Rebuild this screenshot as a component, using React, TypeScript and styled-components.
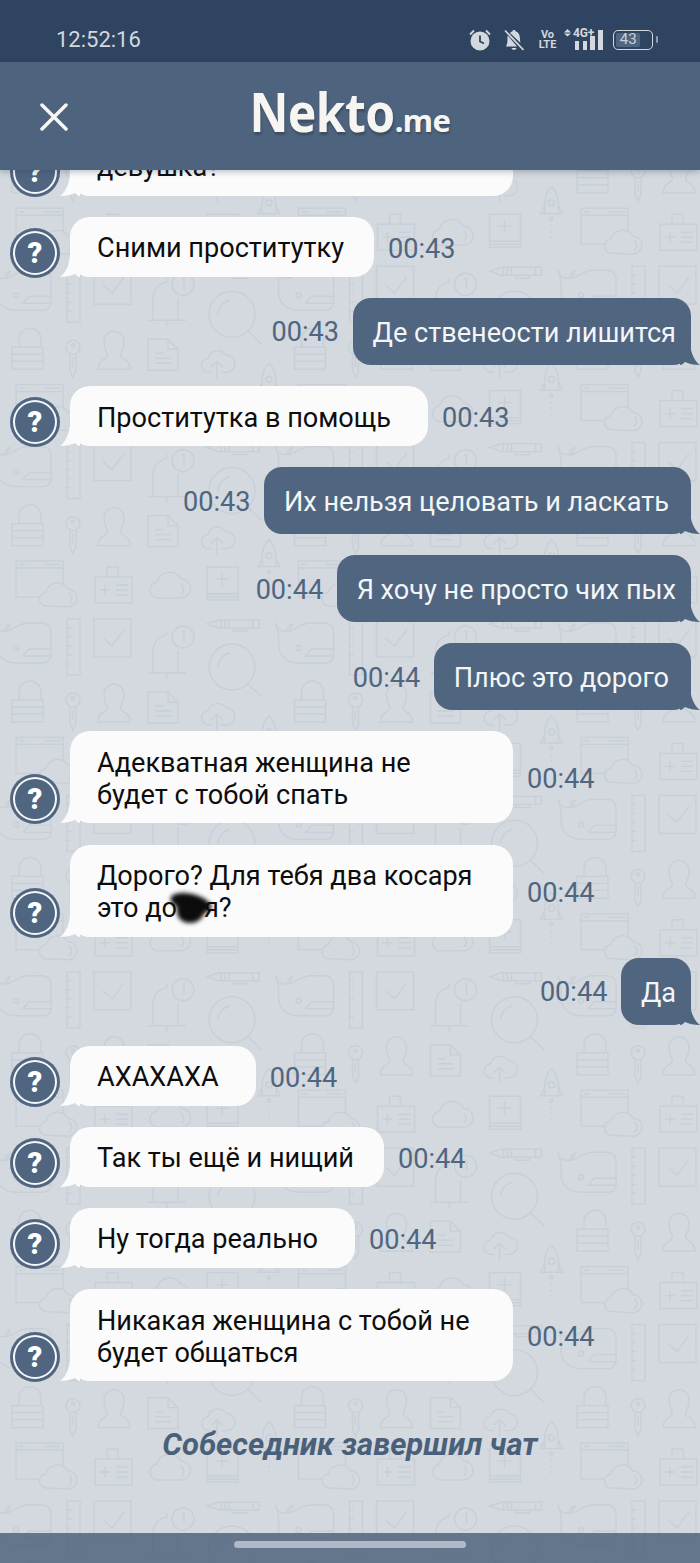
import React from "react";
import styled, { createGlobalStyle } from "styled-components";

const Global = createGlobalStyle`
  html, body { margin: 0; padding: 0; background: #d3d9de; }
  #root { width: 700px; height: 1563px; }
`;

const Page = styled.div`
  position: relative;
  width: 700px;
  height: 1563px;
  display: flex;
  flex-direction: column;
  overflow: hidden;
  background: #d3d9de;
  font-family: Roboto, "Noto Sans", sans-serif;
`;

const Wallpaper = styled.svg`
  position: absolute;
  inset: 0;
  width: 700px;
  height: 1563px;
  fill: none;
  stroke: #c8cfd7;
  stroke-width: 1.4;
`;

const StatusBar = styled.div`
  position: relative;
  z-index: 3;
  flex: none;
  height: 62px;
  background: #2f4460;
  display: flex;
  align-items: center;
  justify-content: space-between;
  padding: 18px 47px 0 56px;
  box-sizing: border-box;
  color: #d3d8de;
`;

const Clock = styled.span`
  font-size: 22px;
  line-height: 26px;
`;

const StatusIcons = styled.div`
  display: flex;
  align-items: center;
`;

const Glyph = styled.svg<{ $gap: number }>`
  display: block;
  flex: none;
  margin-right: ${(p) => p.$gap}px;
`;

const VoLte = styled.span`
  display: flex;
  flex-direction: column;
  align-items: center;
  width: 15px;
  margin-right: 9px;
  font-size: 11px;
  font-weight: 700;
  line-height: 10px;
`;

const Signal = styled.div`
  position: relative;
  width: 40px;
  height: 24px;
  margin-right: 9px;
`;

const NetLabel = styled.span`
  position: absolute;
  left: 9px;
  top: 0;
  font-size: 12px;
  font-weight: 700;
  line-height: 11px;
  letter-spacing: -0.2px;
`;

const Battery = styled.div`
  position: relative;
  width: 40px;
  height: 20px;
  box-sizing: border-box;
  border: 1.5px solid #d3d8de;
  border-radius: 5px;
  display: flex;
  align-items: stretch;
  padding: 2px;
  &::after {
    content: "";
    position: absolute;
    right: -6px;
    top: 5px;
    width: 2px;
    height: 7px;
    border-radius: 1px;
    background: #8e9aa9;
  }
`;

const BatteryFill = styled.span`
  width: 72%;
  border-radius: 2px;
  background: #4f6580;
  font-size: 15px;
  line-height: 13px;
  text-align: center;
  color: #c9d0d8;
`;

const Header = styled.header`
  position: relative;
  z-index: 3;
  flex: none;
  height: 108px;
  background: #4e647e;
  box-shadow: 0 2px 6px rgba(40, 55, 75, 0.3);
  display: flex;
  align-items: center;
  justify-content: center;
`;

const CloseButton = styled.svg`
  position: absolute;
  left: 40px;
  top: 41px;
`;

const Logo = styled.div`
  display: flex;
  align-items: baseline;
  margin: 2px 0 0 0;
  color: #f6f5f2;
  font-family: "Noto Sans", sans-serif;
  font-weight: 700;
  text-shadow: 1px 2px 2px rgba(40, 50, 65, 0.45);
`;

const LogoName = styled.span`
  display: inline-block;
  font-size: 48px;
  line-height: 60px;
  letter-spacing: -0.6px;
  transform: scaleY(1.12);
  transform-origin: 50% 76%;
`;

const LogoTld = styled.span`
  font-size: 31px;
  line-height: 60px;
  letter-spacing: -0.5px;
`;

const Stage = styled.main`
  position: relative;
  z-index: 1;
  flex: 1;
  min-height: 0;
  display: flex;
  flex-direction: column;
  justify-content: flex-end;
  overflow: hidden;
`;

const Feed = styled.div`
  display: flex;
  flex-direction: column;
  gap: 21.1px;
`;

const Row = styled.div<{ $out?: boolean }>`
  display: flex;
  align-items: flex-end;
  justify-content: ${(p) => (p.$out ? "flex-end" : "flex-start")};
  padding: ${(p) => (p.$out ? "0 9px 0 0" : "0 0 0 10px")};
`;

const Avatar = styled.div`
  flex: none;
  width: 50px;
  height: 50px;
  margin: 0 10px 0 0;
  transform: translateY(1px);
  box-sizing: border-box;
  border-radius: 50%;
  background: #4f6580;
  display: flex;
  align-items: center;
  justify-content: center;
  color: #fff;
  font-size: 29px;
  font-weight: 900;
  box-shadow: inset 0 0 0 3px #4f6580, inset 0 0 0 5px #f4f6f8;
`;

const Bubble = styled.div<{ $wide?: boolean; $trail?: boolean }>`
  position: relative;
  box-sizing: border-box;
  width: ${(p) => (p.$wide ? "443px" : "auto")};
  padding: 15.5px ${(p) => (p.$trail ? 37 : 30)}px 12.5px 27px;
  border-radius: 20px;
  background: #fbfbfb;
  color: #0d0d0d;
  font-size: 27.1px;
  line-height: 32px;
`;

const OutBubble = styled.div<{ $trail?: boolean }>`
  position: relative;
  padding: 19px ${(p) => (p.$trail ? 22 : 15)}px 16px 19.5px;
  border-radius: 18px;
  background: #4f6580;
  color: #f3f5f7;
  font-size: 27.1px;
  line-height: 32px;
`;

const Tail = styled.svg<{ $out?: boolean }>`
  position: absolute;
  bottom: 0;
  ${(p) => (p.$out ? "right: -9px;" : "left: -10px;")}
  ${(p) => (p.$out ? "transform: scaleX(-1);" : "")}
`;

const Time = styled.time<{ $out?: boolean }>`
  align-self: center;
  flex: none;
  margin: ${(p) => (p.$out ? "2px 14px 0 0" : "4px 0 0 14px")};
  color: #4f6580;
  font-size: 27.1px;
  line-height: 32px;
`;

const Blot = styled.span`
  display: inline-block;
  position: relative;
  width: 27px;
  height: 24px;
  vertical-align: -2px;
  &::before {
    content: "";
    position: absolute;
    left: -7px;
    top: -1px;
    width: 42px;
    height: 18px;
    border-radius: 50%;
    background: #0c0c0c;
    filter: blur(2px);
    transform: rotate(14deg);
  }
  &::after {
    content: "";
    position: absolute;
    left: 0;
    top: 5px;
    width: 27px;
    height: 23px;
    border-radius: 45% 50% 55% 50%;
    background: #0c0c0c;
    filter: blur(2px);
  }
`;

const Ended = styled.div`
  margin: 47px 0 71px;
  text-align: center;
  color: #4a607a;
  font-size: 31px;
  line-height: 34px;
  font-weight: 700;
  font-style: italic;
`;

const NavBar = styled.div`
  position: relative;
  z-index: 2;
  flex: none;
  height: 30px;
  background: rgba(72, 92, 118, 0.8);
  display: flex;
  align-items: center;
  justify-content: center;
`;

const NavHandle = styled.span`
  width: 232px;
  height: 7px;
  margin-top: -7px;
  border-radius: 4px;
  background: #b0b9c5;
`;

const TileArt = () => (
  <g id="tile">
    {/* browser + cloud */}
    <rect x="16" y="561" width="47" height="36" />
    <path d="M16 568h47M19 564.500h6M44 564.500h16" />
    <path d="M47 606a7 7 0 0 1-1-14 12 12 0 0 1 22-3 9 9 0 0 1 0 18z" fill="#d3d9de" />
    <path d="M69 593a6 6 0 0 1 0 10" />
    {/* badge */}
    <rect x="95" y="577" width="37" height="26" />
    <path d="M107 577v-10h11v10M100 590h10M105 585v10M116 585h12M116 590h12M116 595h12" />
    {/* cloud */}
    <path d="M159 598a8 8 0 0 1-2-16 13 13 0 0 1 24-3 9 9 0 0 1 0 19z" />
    <path d="M181 584a6 6 0 0 1 0 10" />
    {/* book */}
    <path d="M207 567h31v33h-31zM207 594h31M207 597h31" />
    <path d="M222 572v14M215 579h14" />
    {/* pen */}
    <path d="M207 624l12-4h40v8h-40zM221 620v8M225 620v8M229 620v8M233 628v3h14v-3M253 620v8" />
    {/* whale */}
    <path d="M-7 624c2 6 5 7 9 7 2 0 3 1 3-1s2-6 5-6c-1 3-2 5-4 7 6 0 12-8 22-8h14c5 0 9 3 9 8v24c0 4-3 8-7 8H16c-12 0-20-8-20-18 0-6 2-9-3-22z" />
    <circle cx="16" cy="648" r="2.500" />
    <path d="M23 656l6-7h23M23 656h29" />
    {/* ruler */}
    <rect x="67" y="619" width="13" height="56" />
    <path d="M67 628h4M67 637h4M67 646h4M67 655h4M67 664h4" />
    {/* check */}
    <rect x="94" y="619" width="37" height="38" />
    <path d="M103 638l9 8 12-16" />
    {/* bell */}
    <path d="M153 673v-22c0-9 6-15 14-16M178 651v22M148 673h38M167 673v6M167 635v-4" />
    <circle cx="183" cy="637" r="11" fill="#d3d9de" />
    <path d="M182 632l2-1v11" />
    {/* magnifier */}
    <circle cx="232" cy="667" r="23" />
    <path d="M248 684l14 13M218 667a15 15 0 0 1 12-14" />
    {/* lock */}
    <path d="M19 700v-8a11 11 0 0 1 22 0v8M12 700h31v22H12zM12 707h31M12 714h31" />
    {/* key */}
    <circle cx="73" cy="700" r="7" />
    <circle cx="73" cy="698" r="1.500" />
    <path d="M70 707v17l3 6 3-6v-17M73 710v10" />
    {/* user */}
    <path d="M107 706c-3-5-3-9-3-12 0-6 5-10 10-10s10 4 10 10c0 3 0 7-3 12-1 3 0 4 3 6 4 2 6 5 6 10H98c0-5 2-8 6-10 3-2 4-3 3-6z" />
    {/* doc */}
    <path d="M148 692h20l10 10v21h-30zM168 692v10h10M155 706h8M155 711h16M155 716h16" />
    {/* cloud up */}
    <path d="M209 725a7 7 0 0 1-1-14 10 10 0 0 1 18-3 8 8 0 0 1 1 17h-6M211 725h-2" />
    <path d="M217 731v-17M211 720l6-6 6 6" />
    {/* rocket */}
    <path d="M269 716c5 4 7 11 7 20v7h-14v-7c0-9 2-16 7-20zM262 735l-4 8h4M276 735l4 8h-4" />
    <circle cx="269" cy="732" r="3" />
    <circle cx="269" cy="748" r="1.500" />
    <path d="M269 754v18" strokeDasharray="2 4" />
  </g>
);

const Wall = () => {
  const uses: React.ReactElement[] = [];
  for (let r = -3; r <= 6; r++) {
    for (let c = 0; c <= 3; c++) {
      if (r === 0 && c === 0) continue;
      uses.push(<use key={`${r}-${c}`} href="#tile" x={c * 282.5} y={r * 176.4} />);
    }
  }
  return (
    <Wallpaper viewBox="0 0 700 1563" aria-hidden="true">
      <TileArt />
      {uses}
    </Wallpaper>
  );
};

const InTail = ({ out }: { out?: boolean }) => (
  <Tail $out={out} width="20" height="24" viewBox="0 0 20 24" aria-hidden="true">
    <path
      d="M10 0C10 10 6 20 0 24C6 24 11 23 15 21C17 23 18 24 20 24V0Z"
      fill={out ? "#4f6580" : "#fbfbfb"}
    />
  </Tail>
);

type MsgProps = { time?: string; wide?: boolean; trail?: boolean; children: React.ReactNode };

const Incoming = ({ time, wide, trail, children }: MsgProps) => (
  <Row>
    <Avatar>?</Avatar>
    <Bubble $wide={wide} $trail={trail}>
      <InTail />
      {children}
    </Bubble>
    {time && <Time>{time}</Time>}
  </Row>
);

const Outgoing = ({ time, trail, children }: MsgProps) => (
  <Row $out>
    <Time $out>{time}</Time>
    <OutBubble $trail={trail}>
      <InTail out />
      {children}
    </OutBubble>
  </Row>
);

const StatusGlyphs = () => (
  <StatusIcons>
    <Glyph $gap={12} width="22" height="22" viewBox="0 0 22 22" aria-hidden="true">
      <circle cx="11" cy="12" r="9.500" fill="#d3d8de" />
      <path d="M11 6.500V12.500L15 14.500" fill="none" stroke="#2f4460" strokeWidth="1.800" />
      <path d="M1 5.500L5 1.500M21 5.500L17 1.500" fill="none" stroke="#d3d8de" strokeWidth="1.800" />
    </Glyph>
    <Glyph $gap={15} width="22" height="22" viewBox="0 0 22 22" aria-hidden="true">
      <path d="M3 17.500H14L4.700 6.500C4.300 7.500 4.500 8.500 4.500 10C4.500 13 4 15.500 3 17.500Z" fill="#d3d8de" />
      <path d="M7 4C8 2.800 9 2.400 9.500 2.200C9.500.5 12.500.5 12.500 2.200C15.500 3 17 6 17 10C17 11.500 17.300 13 17.500 14Z" fill="#d3d8de" />
      <path d="M8.500 19H13.500C13 21.500 9 21.500 8.500 19Z" fill="#d3d8de" />
      <path d="M2 1.500L20.500 21" stroke="#d3d8de" strokeWidth="1.800" />
    </Glyph>
    <VoLte>
      <span>Vo</span>
      <span>LTE</span>
    </VoLte>
    <Signal>
      <Glyph $gap={0} width="40" height="24" viewBox="0 0 40 24" aria-hidden="true">
        <path d="M3.500 1L7 4.500H0ZM3.500 8.500L7 5.500H0Z" fill="#d3d8de" />
        <path d="M11 13h4v9h-4zM19 13h4v9h-4zM26 8h5v14h-5zM34 2h5v20h-5z" fill="#d3d8de" />
      </Glyph>
      <NetLabel>4G+</NetLabel>
    </Signal>
    <Battery>
      <BatteryFill>43</BatteryFill>
    </Battery>
  </StatusIcons>
);

export default function App() {
  return (
    <Page>
      <Global />
      <Wall />
      <StatusBar>
        <Clock>12:52:16</Clock>
        <StatusGlyphs />
      </StatusBar>
      <Header>
        <CloseButton width="28" height="28" viewBox="0 0 28 28" aria-hidden="true">
          <path d="M2 2L26 26M26 2L2 26" stroke="#f7f7f5" strokeWidth="3.500" strokeLinecap="round" />
        </CloseButton>
        <Logo>
          <LogoName>Nekto</LogoName>
          <LogoTld>.me</LogoTld>
        </Logo>
      </Header>
      <Stage>
        <Feed>
          <Incoming wide>
            &nbsp;
            <br />
            девушка?
          </Incoming>
          <Incoming time="00:43">Сними проститутку</Incoming>
          <Outgoing time="00:43">Де ственеости лишится</Outgoing>
          <Incoming time="00:43" trail>Проститутка в помощь</Incoming>
          <Outgoing time="00:43" trail>Их нельзя целовать и ласкать</Outgoing>
          <Outgoing time="00:44">Я хочу не просто чих пых</Outgoing>
          <Outgoing time="00:44" trail>Плюс это дорого</Outgoing>
          <Incoming time="00:44" wide>
            Адекватная женщина не будет с тобой спать
          </Incoming>
          <Incoming time="00:44" wide>
            Дорого? Для тебя два косаря это до
            <Blot />
            я?
          </Incoming>
          <Outgoing time="00:44">Да</Outgoing>
          <Incoming time="00:44" trail>АХАХАХА</Incoming>
          <Incoming time="00:44">Так ты ещё и нищий</Incoming>
          <Incoming time="00:44" trail>Ну тогда реально</Incoming>
          <Incoming time="00:44" wide>
            Никакая женщина с тобой не будет общаться
          </Incoming>
        </Feed>
        <Ended>Собеседник завершил чат</Ended>
      </Stage>
      <NavBar>
        <NavHandle />
      </NavBar>
    </Page>
  );
}
